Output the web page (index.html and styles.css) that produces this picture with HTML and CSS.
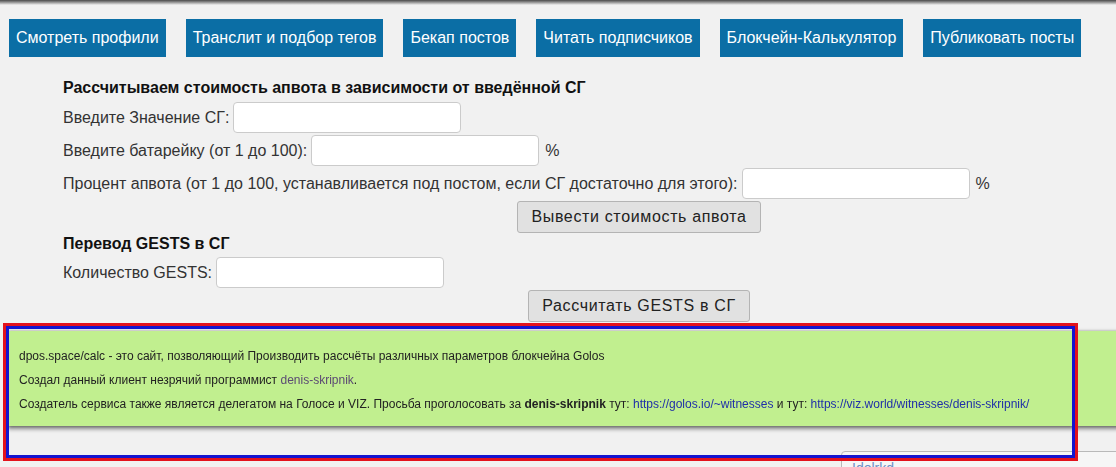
FILE: index.html
```html
<!DOCTYPE html>
<html lang="ru">
<head>
<meta charset="utf-8">
<title>Блокчейн-Калькулятор</title>
<link rel="stylesheet" href="styles.css">
</head>
<body>
<div class="topshadow"></div>
<nav class="nav">
  <a class="nav-btn" href="#">Смотреть профили</a>
  <a class="nav-btn" href="#">Транслит и подбор тегов</a>
  <a class="nav-btn" href="#">Бекап постов</a>
  <a class="nav-btn" href="#">Читать подписчиков</a>
  <a class="nav-btn" href="#">Блокчейн-Калькулятор</a>
  <a class="nav-btn" href="#">Публиковать посты</a>
</nav>
<main class="calc">
  <h3 class="title">Рассчитываем стоимость апвота в зависимости от введённой СГ</h3>
  <div class="row r1"><span>Введите Значение СГ:</span><input class="field" type="text"></div>
  <div class="row"><span>Введите батарейку (от 1 до 100):</span><input class="field" type="text"><span class="pct">%</span></div>
  <div class="row"><span>Процент апвота (от 1 до 100, устанавливается под постом, если СГ достаточно для этого):</span><input class="field" type="text"><span class="pct">%</span></div>
  <div class="btn-row"><button class="gbtn">Вывести стоимость апвота</button></div>
  <h3 class="title t2">Перевод GESTS в СГ</h3>
  <div class="row r2"><span>Количество GESTS:</span><input class="field" type="text"></div>
  <div class="btn-row"><button class="gbtn">Рассчитать GESTS в СГ</button></div>
</main>
<footer class="info">
  <p>dpos.space/calc - это сайт, позволяющий Производить рассчёты различных параметров блокчейна Golos</p>
  <p>Создал данный клиент незрячий программист <a class="visited" href="#">denis-skripnik</a>.</p>
  <p>Создатель сервиса также является делегатом на Голосе и VIZ. Просьба проголосовать за <b>denis-skripnik</b> тут: <a href="#">https://golos.io/~witnesses</a> и тут: <a href="#">https://viz.world/witnesses/denis-skripnik/</a></p>
</footer>
<div class="corner-box"><span>Idolrkd</span></div>
<div class="outline"></div>
</body>
</html>
```
FILE: styles.css
```css
html, body {
  margin: 0;
  padding: 0;
  background: #f1f1f1;
  overflow: hidden;
  font-family: "Liberation Sans", Arial, sans-serif;
  color: #222;
}
.topshadow {
  height: 5px;
  background: linear-gradient(#4a4a4a, #8a8a8a 40%, #f1f1f1);
}
.nav {
  display: flex;
  gap: 20px;
  padding: 14px 0 0 9px;
}
.nav-btn {
  display: block;
  background: #0b6ea5;
  color: #fff;
  text-decoration: none;
  font-size: 16px;
  line-height: 38px;
  height: 38px;
  padding: 0 7px;
  white-space: nowrap;
}
.calc {
  margin-left: 63px;
  font-size: 16px;
}
.title {
  margin: 21px 0 0;
  font-size: 16px;
  line-height: 20px;
  font-weight: bold;
  color: #111;
}
.title.t2 {
  margin-top: 1px;
}
.row {
  display: flex;
  align-items: center;
  gap: 4px;
  height: 31px;
  margin-top: 2px;
  white-space: nowrap;
  color: #333;
}
.row.r1 { margin-top: 4px; }
.row.r2 { margin-top: 3px; }
.field {
  width: 228px;
  height: 31px;
  box-sizing: border-box;
  border: 1px solid #cbcbcb;
  border-radius: 4px;
  background: #fff;
  margin: 0;
}
.pct {
  margin-left: 2px;
}
.btn-row {
  width: 1152px;
  display: flex;
  justify-content: center;
  margin-top: 2px;
}
.gbtn {
  height: 32px;
  padding: 0 13px;
  font-family: "Liberation Sans", Arial, sans-serif;
  font-size: 16px;
  letter-spacing: 0.65px;
  color: #222;
  background: #e1e1e1;
  border: 1px solid #b4b4b4;
  border-radius: 3px;
}
.info {
  position: fixed;
  left: 8px;
  right: -20px;
  top: 331px;
  height: 95px;
  box-sizing: border-box;
  padding: 13px 11px 0;
  background: #c1ef8f;
  box-shadow: 0 0 3px rgba(0,0,0,0.35), 0 3px 4px rgba(0,0,0,0.45);
  font-size: 12px;
  color: #222;
}
.info p {
  margin: 0;
  line-height: 24px;
  white-space: nowrap;
}
.info a {
  color: #1f2fa8;
  text-decoration: none;
}
.info a.visited {
  color: #5b4a73;
}
.corner-box {
  position: fixed;
  left: 841px;
  top: 451px;
  width: 300px;
  height: 40px;
  border: 1px solid #b9b9b9;
  border-radius: 4px 0 0 0;
  background: #f6f6f6;
  padding: 8px 0 0 10px;
  box-sizing: border-box;
  font-size: 14px;
  color: #6e8fc5;
}
.outline {
  position: fixed;
  left: 3px;
  top: 323px;
  width: 1075px;
  height: 138px;
  box-sizing: border-box;
  border: 3px solid #e3121c;
  box-shadow: inset 0 0 0 3px #1414cf;
}
```
